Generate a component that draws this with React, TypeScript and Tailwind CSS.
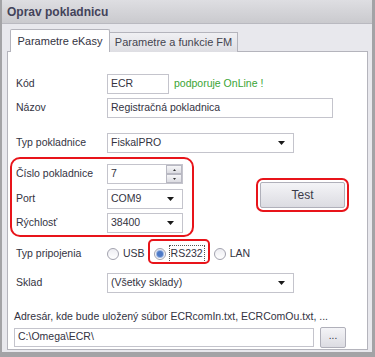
import React from "react";

function Arrow() {
  return (
    <svg width="7" height="4" viewBox="0 0 7 4" className="shrink-0">
      <path d="M0 0h7L3.5 4z" fill="#1a1a1a" />
    </svg>
  );
}

function Select({ value, w }: { value: string; w: string }) {
  return (
    <div className={`${w} h-[20px] flex items-center justify-between border border-[#c4c4cc] bg-white pl-[3px] pr-[8px]`}>
      <span>{value}</span>
      <Arrow />
    </div>
  );
}

function Row({ label, children, mt }: { label: string; children: React.ReactNode; mt: string }) {
  return (
    <div className={`flex items-center ${mt}`}>
      <div className="w-[91px] shrink-0">{label}</div>
      {children}
    </div>
  );
}

function Radio({ on }: { on?: boolean }) {
  return (
    <span className="w-[12px] h-[12px] rounded-full border border-[#a2a2ae] bg-gradient-to-b from-[#ededf2] to-[#ffffff] flex items-center justify-center shrink-0">
      {on && <span className="w-[6px] h-[6px] rounded-full bg-[#4d79c6] ring-1 ring-[#9bb6e4]" />}
    </span>
  );
}

function SpinBtn({ up }: { up?: boolean }) {
  return (
    <div className="h-[9px] w-[16px] border border-[#b8b8c2] bg-gradient-to-b from-[#f6f6f8] to-[#dcdce2] flex items-center justify-center">
      <svg width="3" height="2" viewBox="0 0 3 2">
        <path d={up ? "M0 2h3L1.5 0z" : "M0 0h3L1.5 2z"} fill="#333" />
      </svg>
    </div>
  );
}

export default function App() {
  return (
    <div
      className="w-[375px] h-[357px] overflow-hidden border-l-2 border-r-[3px] border-b-[5px] border-[#a3a3a6] bg-[#e8e8ed] text-[10.5px] text-[#33333f]"
      style={{ fontFamily: '"Liberation Sans", Arial, sans-serif' }}
    >
      <div className="h-[24px] flex items-center pl-[5px] bg-gradient-to-b from-[#dedee2] to-[#cacace] border-b border-[#b9b9c0] font-bold text-[12px] text-[#43435a]">
        Oprav pokladnicu
      </div>

      <div className="pt-[5px] pl-[5px] pr-[4px]">
        <div className="flex items-end pl-[3px]">
          <div className="w-[100px] h-[23px] bg-white border border-b-0 border-[#b4b4bc] rounded-t-[2px] flex items-center justify-center relative z-10 text-[11px]">
            Parametre eKasy
          </div>
          <div className="w-[128px] h-[20px] bg-gradient-to-b from-[#f0f0f3] to-[#dedee3] border border-l-0 border-b-0 border-[#b4b4bc] flex items-center justify-center text-[#44444f] text-[11px]">
            Parametre a funkcie FM
          </div>
        </div>

        <div className="-mt-px h-[299px] bg-white border border-[#b4b4bc] pl-[8px] pt-[22px]">
          <Row label="Kód" mt="mt-0">
            <div className="w-[62px] h-[20px] border border-[#c4c4cc] flex items-center pl-[3px]">ECR</div>
            <span className="ml-[5px] text-[#3aa435]">podporuje OnLine !</span>
          </Row>
          <Row label="Názov" mt="mt-[4px]">
            <div className="w-[226px] h-[20px] border border-[#c4c4cc] flex items-center pl-[3px]">Registračná pokladnica</div>
          </Row>
          <Row label="Typ pokladnice" mt="mt-[15px]">
            <Select value="FiskalPRO" w="w-[187px]" />
          </Row>

          <div className="flex items-start mt-[11px]">
            <div className="relative">
              <div className="absolute -left-[6px] -top-[7px] w-[184px] h-[80px] border-2 border-[#e8141a] rounded-[10px]" />
              <Row label="Číslo pokladnice" mt="mt-0">
                <div className="w-[76px] h-[20px] border border-[#c4c4cc] flex items-center justify-between pl-[3px]">
                  <span>7</span>
                  <div className="flex flex-col">
                    <SpinBtn up />
                    <SpinBtn />
                  </div>
                </div>
              </Row>
              <Row label="Port" mt="mt-[5px]">
                <Select value="COM9" w="w-[76px]" />
              </Row>
              <Row label="Rýchlosť" mt="mt-[4px]">
                <Select value="38400" w="w-[76px]" />
              </Row>
            </div>
            <div className="relative ml-[77px] mt-[18px]">
              <div className="absolute -left-[4px] -top-[4px] w-[93px] h-[34px] border-2 border-[#e8141a] rounded-[7px]" />
              <div className="w-[85px] h-[26px] border border-[#b0b0ba] rounded-[2px] bg-gradient-to-b from-[#f4f4f7] to-[#dcdce2] flex items-center justify-center text-[12px] text-[#3a3a48]">
                Test
              </div>
            </div>
          </div>

          <Row label="Typ pripojenia" mt="mt-[11px]">
            <div className="flex items-center h-[20px]">
              <Radio />
              <span className="ml-[4px]">USB</span>
              <div className="relative flex items-center ml-[9px]">
                <div className="absolute -left-[6px] -top-[6px] -right-[5px] h-[25px] border-2 border-[#e8141a] rounded-[5px]" />
                <Radio on />
                <span className="ml-[3px] px-[1px] border border-dotted border-[#555]">RS232</span>
              </div>
              <span className="ml-[9px]"><Radio /></span>
              <span className="ml-[4px]">LAN</span>
            </div>
          </Row>

          <Row label="Sklad" mt="mt-[9px]">
            <Select value="(Všetky sklady)" w="w-[187px]" />
          </Row>

          <div className="mt-[16px] -ml-[2px]">Adresár, kde bude uložený súbor ECRcomIn.txt, ECRComOu.txt, ...</div>
          <div className="flex items-center mt-[2px] -ml-[2px]">
            <div className="w-[300px] h-[19px] border border-[#c4c4cc] flex items-center pl-[3px]">C:\Omega\ECR\</div>
            <div className="ml-[6px] w-[26px] h-[21px] border border-[#b0b0ba] rounded-[2px] bg-gradient-to-b from-[#f4f4f7] to-[#dcdce2] flex items-center justify-center text-[10px] leading-none pb-[2px]">
              ...
            </div>
          </div>
        </div>
      </div>
    </div>
  );
}
